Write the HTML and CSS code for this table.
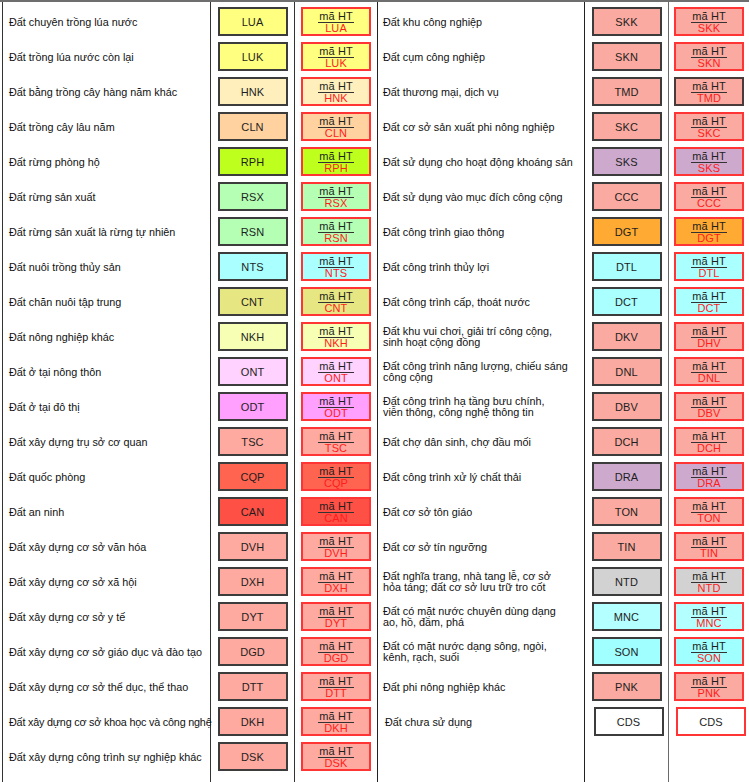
FILE: index.html
```html
<!DOCTYPE html>
<html lang="vi">
<head>
<meta charset="utf-8">
<title>Bảng mã loại đất</title>
<link rel="stylesheet" href="styles.css">
</head>
<body>
<div class="sheet">
  <section class="panel panel-left">
    <div class="col labels">
      <div class="cell">Đất chuyên trồng lúa nước</div>
      <div class="cell">Đất trồng lúa nước còn lại</div>
      <div class="cell">Đất bằng trồng cây hàng năm khác</div>
      <div class="cell">Đất trồng cây lâu năm</div>
      <div class="cell">Đất rừng phòng hộ</div>
      <div class="cell">Đất rừng sản xuất</div>
      <div class="cell">Đất rừng sản xuất là rừng tự nhiên</div>
      <div class="cell">Đất nuôi trồng thủy sản</div>
      <div class="cell">Đất chăn nuôi tập trung</div>
      <div class="cell">Đất nông nghiệp khác</div>
      <div class="cell">Đất ở tại nông thôn</div>
      <div class="cell">Đất ở tại đô thị</div>
      <div class="cell">Đất xây dựng trụ sở cơ quan</div>
      <div class="cell">Đất quốc phòng</div>
      <div class="cell">Đất an ninh</div>
      <div class="cell">Đất xây dựng cơ sở văn hóa</div>
      <div class="cell">Đất xây dựng cơ sở xã hội</div>
      <div class="cell">Đất xây dựng cơ sở y tế</div>
      <div class="cell">Đất xây dựng cơ sở giáo dục và đào tạo</div>
      <div class="cell">Đất xây dựng cơ sở thể dục, thể thao</div>
      <div class="cell tight">Đất xây dựng cơ sở khoa học và công nghệ</div>
      <div class="cell">Đất xây dựng công trình sự nghiệp khác</div>
    </div>
    <div class="col codes">
      <div class="cell"><div class="box lua">LUA</div></div>
      <div class="cell"><div class="box lua">LUK</div></div>
      <div class="cell"><div class="box hnk">HNK</div></div>
      <div class="cell"><div class="box cln">CLN</div></div>
      <div class="cell"><div class="box rph">RPH</div></div>
      <div class="cell"><div class="box rsx">RSX</div></div>
      <div class="cell"><div class="box rsx">RSN</div></div>
      <div class="cell"><div class="box nts">NTS</div></div>
      <div class="cell"><div class="box cnt">CNT</div></div>
      <div class="cell"><div class="box nkh">NKH</div></div>
      <div class="cell"><div class="box ont">ONT</div></div>
      <div class="cell"><div class="box odt">ODT</div></div>
      <div class="cell"><div class="box tsc">TSC</div></div>
      <div class="cell"><div class="box cqp">CQP</div></div>
      <div class="cell"><div class="box can">CAN</div></div>
      <div class="cell"><div class="box tsc">DVH</div></div>
      <div class="cell"><div class="box tsc">DXH</div></div>
      <div class="cell"><div class="box tsc">DYT</div></div>
      <div class="cell"><div class="box tsc">DGD</div></div>
      <div class="cell"><div class="box tsc">DTT</div></div>
      <div class="cell"><div class="box tsc">DKH</div></div>
      <div class="cell"><div class="box tsc">DSK</div></div>
    </div>
    <div class="col maps">
      <div class="cell"><div class="box map lua"><span class="frac">mã HT</span><span class="mcode">LUA</span></div></div>
      <div class="cell"><div class="box map lua"><span class="frac">mã HT</span><span class="mcode">LUK</span></div></div>
      <div class="cell"><div class="box map hnk"><span class="frac">mã HT</span><span class="mcode">HNK</span></div></div>
      <div class="cell"><div class="box map cln"><span class="frac">mã HT</span><span class="mcode">CLN</span></div></div>
      <div class="cell"><div class="box map rph"><span class="frac">mã HT</span><span class="mcode">RPH</span></div></div>
      <div class="cell"><div class="box map rsx"><span class="frac">mã HT</span><span class="mcode">RSX</span></div></div>
      <div class="cell"><div class="box map rsx"><span class="frac">mã HT</span><span class="mcode">RSN</span></div></div>
      <div class="cell"><div class="box map nts"><span class="frac">mã HT</span><span class="mcode">NTS</span></div></div>
      <div class="cell"><div class="box map cnt"><span class="frac">mã HT</span><span class="mcode">CNT</span></div></div>
      <div class="cell"><div class="box map nkh"><span class="frac">mã HT</span><span class="mcode">NKH</span></div></div>
      <div class="cell"><div class="box map ont"><span class="frac">mã HT</span><span class="mcode">ONT</span></div></div>
      <div class="cell"><div class="box map odt"><span class="frac">mã HT</span><span class="mcode">ODT</span></div></div>
      <div class="cell"><div class="box map tsc"><span class="frac">mã HT</span><span class="mcode">TSC</span></div></div>
      <div class="cell"><div class="box map cqp"><span class="frac">mã HT</span><span class="mcode">CQP</span></div></div>
      <div class="cell"><div class="box map can"><span class="frac">mã HT</span><span class="mcode">CAN</span></div></div>
      <div class="cell"><div class="box map tsc"><span class="frac">mã HT</span><span class="mcode">DVH</span></div></div>
      <div class="cell"><div class="box map tsc"><span class="frac">mã HT</span><span class="mcode">DXH</span></div></div>
      <div class="cell"><div class="box map tsc"><span class="frac">mã HT</span><span class="mcode">DYT</span></div></div>
      <div class="cell"><div class="box map tsc"><span class="frac">mã HT</span><span class="mcode">DGD</span></div></div>
      <div class="cell"><div class="box map tsc"><span class="frac">mã HT</span><span class="mcode">DTT</span></div></div>
      <div class="cell"><div class="box map tsc"><span class="frac">mã HT</span><span class="mcode">DKH</span></div></div>
      <div class="cell"><div class="box map tsc"><span class="frac">mã HT</span><span class="mcode">DSK</span></div></div>
    </div>
  </section>

  <section class="panel panel-right">
    <div class="col labels">
      <div class="cell">Đất khu công nghiệp</div>
      <div class="cell">Đất cụm công nghiệp</div>
      <div class="cell">Đất thương mại, dịch vụ</div>
      <div class="cell">Đất cơ sở sản xuất phi nông nghiệp</div>
      <div class="cell">Đất sử dụng cho hoạt động khoáng sản</div>
      <div class="cell">Đất sử dụng vào mục đích công cộng</div>
      <div class="cell">Đất công trình giao thông</div>
      <div class="cell">Đất công trình thủy lợi</div>
      <div class="cell">Đất công trình cấp, thoát nước</div>
      <div class="cell two">Đất khu vui chơi, giải trí công cộng,<br>sinh hoạt cộng đồng</div>
      <div class="cell two">Đất công trình năng lượng, chiếu sáng<br>công cộng</div>
      <div class="cell two">Đất công trình hạ tầng bưu chính,<br>viễn thông, công nghệ thông tin</div>
      <div class="cell">Đất chợ dân sinh, chợ đầu mối</div>
      <div class="cell">Đất công trình xử lý chất thải</div>
      <div class="cell">Đất cơ sở tôn giáo</div>
      <div class="cell">Đất cơ sở tín ngưỡng</div>
      <div class="cell two">Đất nghĩa trang, nhà tang lễ, cơ sở<br>hỏa táng; đất cơ sở lưu trữ tro cốt</div>
      <div class="cell two">Đất có mặt nước chuyên dùng dạng<br>ao, hồ, đầm, phá</div>
      <div class="cell two">Đất có mặt nước dạng sông, ngòi,<br>kênh, rạch, suối</div>
      <div class="cell">Đất phi nông nghiệp khác</div>
      <div class="cell shifted">Đất chưa sử dụng</div>
    </div>
    <div class="col codes">
      <div class="cell"><div class="box skk">SKK</div></div>
      <div class="cell"><div class="box skk">SKN</div></div>
      <div class="cell"><div class="box skk">TMD</div></div>
      <div class="cell"><div class="box skk">SKC</div></div>
      <div class="cell"><div class="box sks">SKS</div></div>
      <div class="cell"><div class="box skk">CCC</div></div>
      <div class="cell"><div class="box dgt">DGT</div></div>
      <div class="cell"><div class="box dtl">DTL</div></div>
      <div class="cell"><div class="box dtl">DCT</div></div>
      <div class="cell"><div class="box skk">DKV</div></div>
      <div class="cell"><div class="box skk">DNL</div></div>
      <div class="cell"><div class="box skk">DBV</div></div>
      <div class="cell"><div class="box skk">DCH</div></div>
      <div class="cell"><div class="box sks">DRA</div></div>
      <div class="cell"><div class="box skk">TON</div></div>
      <div class="cell"><div class="box skk">TIN</div></div>
      <div class="cell"><div class="box ntd">NTD</div></div>
      <div class="cell"><div class="box mnc">MNC</div></div>
      <div class="cell"><div class="box son">SON</div></div>
      <div class="cell"><div class="box skk">PNK</div></div>
      <div class="cell shifted"><div class="box cds">CDS</div></div>
    </div>
    <div class="col maps">
      <div class="cell"><div class="box map skk"><span class="frac">mã HT</span><span class="mcode">SKK</span></div></div>
      <div class="cell"><div class="box map skk"><span class="frac">mã HT</span><span class="mcode">SKN</span></div></div>
      <div class="cell"><div class="box map skk dark"><span class="frac">mã HT</span><span class="mcode">TMD</span></div></div>
      <div class="cell"><div class="box map skk"><span class="frac">mã HT</span><span class="mcode">SKC</span></div></div>
      <div class="cell"><div class="box map sks"><span class="frac">mã HT</span><span class="mcode">SKS</span></div></div>
      <div class="cell"><div class="box map skk"><span class="frac">mã HT</span><span class="mcode">CCC</span></div></div>
      <div class="cell"><div class="box map dgt"><span class="frac">mã HT</span><span class="mcode">DGT</span></div></div>
      <div class="cell"><div class="box map dtl"><span class="frac">mã HT</span><span class="mcode">DTL</span></div></div>
      <div class="cell"><div class="box map dtl"><span class="frac">mã HT</span><span class="mcode">DCT</span></div></div>
      <div class="cell"><div class="box map skk"><span class="frac">mã HT</span><span class="mcode">DHV</span></div></div>
      <div class="cell"><div class="box map skk"><span class="frac">mã HT</span><span class="mcode">DNL</span></div></div>
      <div class="cell"><div class="box map skk"><span class="frac">mã HT</span><span class="mcode">DBV</span></div></div>
      <div class="cell"><div class="box map skk"><span class="frac">mã HT</span><span class="mcode">DCH</span></div></div>
      <div class="cell"><div class="box map sks"><span class="frac">mã HT</span><span class="mcode">DRA</span></div></div>
      <div class="cell"><div class="box map skk"><span class="frac">mã HT</span><span class="mcode">TON</span></div></div>
      <div class="cell"><div class="box map skk"><span class="frac">mã HT</span><span class="mcode">TIN</span></div></div>
      <div class="cell"><div class="box map ntd"><span class="frac">mã HT</span><span class="mcode">NTD</span></div></div>
      <div class="cell"><div class="box map mnc"><span class="frac">mã HT</span><span class="mcode">MNC</span></div></div>
      <div class="cell"><div class="box map son"><span class="frac">mã HT</span><span class="mcode">SON</span></div></div>
      <div class="cell"><div class="box map skk"><span class="frac">mã HT</span><span class="mcode">PNK</span></div></div>
      <div class="cell shifted"><div class="box map cds">CDS</div></div>
    </div>
  </section>
</div>
</body>
</html>
```

FILE: styles.css
```css
html, body {
  margin: 0;
  padding: 0;
  background: #ffffff;
}

body {
  font-family: "Liberation Sans", Arial, sans-serif;
  font-size: 11px;
  color: #111111;
  width: 749px;
  height: 782px;
  overflow: hidden;
}

.sheet {
  display: flex;
  height: 782px;
  border-top: 2px solid #6e6e6e;
  box-sizing: border-box;
}

.panel {
  display: flex;
  height: 100%;
}

.col {
  display: flex;
  flex-direction: column;
  padding-top: 2px;
  box-sizing: border-box;
  height: 100%;
}

.cell {
  height: 35px;
  flex: 0 0 35px;
  display: flex;
  align-items: center;
  box-sizing: border-box;
}

/* left panel */
.panel-left .labels {
  margin-left: 2px;
  border-left: 1px solid #333333;
  border-right: 1px solid #333333;
  width: 209px;
  padding-left: 6px;
}
.panel-left .codes {
  width: 84px;
  border-right: 1px solid #333333;
}
.panel-left .maps {
  width: 83px;
  border-right: 1px solid #222222;
}

/* right panel */
.panel-right .labels {
  width: 207px;
  border-right: 1px solid #222222;
  padding-left: 5px;
}
.panel-right .codes {
  width: 84px;
  border-right: 1px solid #6a6a6a;
}
.panel-right .maps {
  width: 80px;
}

.labels .cell {
  white-space: nowrap;
  font-size: 10.8px;
}
.labels .cell.tight {
  letter-spacing: -0.2px;
}
.labels .cell.two {
  line-height: 11px;
}
.labels .cell.shifted {
  padding-left: 2px;
}

.codes .cell,
.maps .cell {
  justify-content: center;
}
.codes .cell.shifted,
.maps .cell.shifted {
  padding-left: 4px;
}

.box {
  width: 70px;
  height: 29px;
  box-sizing: border-box;
  border: 2px solid #3c3c3c;
  display: flex;
  align-items: center;
  justify-content: center;
  color: #1e1e1e;
  font-size: 11px;
  letter-spacing: 0.1px;
}

.map {
  flex-direction: column;
  border-color: #ff3434;
}
.map.dark {
  border-color: #4a3a3a;
}

.frac {
  line-height: 11px;
  border-bottom: 1px solid #333333;
  padding: 0 1px;
  margin-top: 1px;
  color: #1e1e1e;
}
.mcode {
  line-height: 11px;
  color: #ff1c1c;
}

/* land colours */
.lua { background: #ffff80; }
.hnk { background: #ffefbd; }
.cln { background: #ffd2a0; }
.rph { background: #bfff1e; }
.rsx { background: #b4ffb4; }
.nts { background: #aaffff; }
.cnt { background: #e6e682; }
.nkh { background: #f6ffb4; }
.ont { background: #ffd2ff; }
.odt { background: #ffa0ff; }
.tsc { background: #ffaaa0; }
.cqp { background: #ff6450; }
.can { background: #ff5046; }
.skk { background: #faaaa0; }
.sks { background: #cdaacd; }
.dgt { background: #ffaa32; }
.dtl { background: #aaffff; }
.ntd { background: #d2d2d2; }
.mnc { background: #b4ffff; }
.son { background: #a0ffff; }
.cds { background: #ffffff; }
```
